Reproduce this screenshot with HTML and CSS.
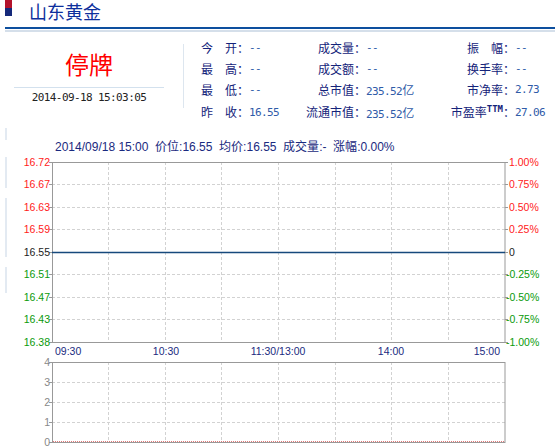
FILE: index.html
```html
<!DOCTYPE html>
<html lang="zh-CN">
<head>
    <meta charset="UTF-8">
    <meta name="viewport" content="width=device-width, initial-scale=1.0">
    <title>山东黄金</title>
    <link rel="stylesheet" href="styles.css">
</head>
<body>
    <div class="header">
        <div class="logo"></div>
        <h1 class="title">山东黄金</h1>
    </div>
    <div class="rule-dark"></div>
    <div class="rule-light"></div>

    <div class="quote">
        <div class="status-box">
            <div class="status">停牌</div>
            <div class="time">2014-09-18 15:03:05</div>
        </div>
        <div class="stats">
            <span class="lbl">今　开：</span><span class="val">--</span>
            <span class="lbl r">成交量：</span><span class="val">--</span>
            <span class="lbl r">振　幅：</span><span class="val">--</span>

            <span class="lbl">最　高：</span><span class="val">--</span>
            <span class="lbl r">成交额：</span><span class="val">--</span>
            <span class="lbl r">换手率：</span><span class="val">--</span>

            <span class="lbl">最　低：</span><span class="val">--</span>
            <span class="lbl r">总市值：</span><span class="val">235.52<span class="cn">亿</span></span>
            <span class="lbl r">市净率：</span><span class="val">2.73</span>

            <span class="lbl">昨　收：</span><span class="val">16.55</span>
            <span class="lbl r">流通市值：</span><span class="val">235.52<span class="cn">亿</span></span>
            <span class="lbl r">市盈率<sup>TTM</sup>：</span><span class="val">27.06</span>
        </div>
    </div>

    <svg class="chart" width="555" height="327" viewBox="0 0 555 327">
        <!-- faint rail on the left -->
        <g class="rail">
            <line x1="6" y1="8" x2="6" y2="20"/>
            <line x1="6" y1="37" x2="6" y2="68"/>
            <line x1="6" y1="78" x2="6" y2="137"/>
            <line x1="6" y1="147" x2="6" y2="173"/>
        </g>

        <text class="info" x="55" y="31">2014/09/18 15:00&#160; 价位:16.55&#160; 均价:16.55&#160; 成交量:-&#160; 涨幅:0.00%</text>

        <!-- price grid -->
        <g class="grid">
            <line x1="52" y1="64.5" x2="505" y2="64.5"/>
            <line x1="52" y1="87.5" x2="505" y2="87.5"/>
            <line x1="52" y1="109.5" x2="505" y2="109.5"/>
            <line x1="52" y1="154.5" x2="505" y2="154.5"/>
            <line x1="52" y1="177.5" x2="505" y2="177.5"/>
            <line x1="52" y1="199.5" x2="505" y2="199.5"/>
            <line x1="108.5" y1="42" x2="108.5" y2="222"/>
            <line x1="165.5" y1="42" x2="165.5" y2="222"/>
            <line x1="221.5" y1="42" x2="221.5" y2="222"/>
            <line x1="278.5" y1="42" x2="278.5" y2="222"/>
            <line x1="335.5" y1="42" x2="335.5" y2="222"/>
            <line x1="391.5" y1="42" x2="391.5" y2="222"/>
            <line x1="448.5" y1="42" x2="448.5" y2="222"/>
        </g>
        <rect class="frame" x="52.5" y="42.5" width="452.5" height="180"/>
        <g class="ticks">
            <line x1="49" y1="42.5" x2="52" y2="42.5"/>
            <line x1="49" y1="64.5" x2="52" y2="64.5"/>
            <line x1="49" y1="87.5" x2="52" y2="87.5"/>
            <line x1="49" y1="109.5" x2="52" y2="109.5"/>
            <line x1="49" y1="132.5" x2="52" y2="132.5"/>
            <line x1="49" y1="154.5" x2="52" y2="154.5"/>
            <line x1="49" y1="177.5" x2="52" y2="177.5"/>
            <line x1="49" y1="199.5" x2="52" y2="199.5"/>
            <line x1="49" y1="222.5" x2="52" y2="222.5"/>
            <line x1="505" y1="42.5" x2="508" y2="42.5"/>
            <line x1="505" y1="64.5" x2="508" y2="64.5"/>
            <line x1="505" y1="87.5" x2="508" y2="87.5"/>
            <line x1="505" y1="109.5" x2="508" y2="109.5"/>
            <line x1="505" y1="132.5" x2="508" y2="132.5"/>
            <line x1="505" y1="154.5" x2="508" y2="154.5"/>
            <line x1="505" y1="177.5" x2="508" y2="177.5"/>
            <line x1="505" y1="199.5" x2="508" y2="199.5"/>
            <line x1="505" y1="222.5" x2="508" y2="222.5"/>
        </g>
        <line class="price" x1="52" y1="132.5" x2="505" y2="132.5"/>

        <g class="axis-l">
            <text class="up" x="50" y="46">16.72</text>
            <text class="up" x="50" y="68">16.67</text>
            <text class="up" x="50" y="91">16.63</text>
            <text class="up" x="50" y="113">16.59</text>
            <text class="flat" x="50" y="136">16.55</text>
            <text class="down" x="50" y="158">16.51</text>
            <text class="down" x="50" y="181">16.47</text>
            <text class="down" x="50" y="203">16.43</text>
            <text class="down" x="50" y="226">16.38</text>
        </g>
        <g class="axis-r">
            <text class="up" x="509" y="46">1.00%</text>
            <text class="up" x="509" y="68">0.75%</text>
            <text class="up" x="509" y="91">0.50%</text>
            <text class="up" x="509" y="113">0.25%</text>
            <text class="flat" x="509" y="136">0</text>
            <text class="down" x="506" y="158">-0.25%</text>
            <text class="down" x="506" y="181">-0.50%</text>
            <text class="down" x="506" y="203">-0.75%</text>
            <text class="down" x="506" y="226">-1.00%</text>
        </g>
        <g class="axis-x">
            <text x="55" y="235">09:30</text>
            <text x="166" y="235" text-anchor="middle">10:30</text>
            <text x="278" y="235" text-anchor="middle">11:30/13:00</text>
            <text x="391" y="235" text-anchor="middle">14:00</text>
            <text x="500" y="235" text-anchor="end">15:00</text>
        </g>

        <!-- volume grid -->
        <g class="grid">
            <line x1="52" y1="262.5" x2="505" y2="262.5"/>
            <line x1="52" y1="282.5" x2="505" y2="282.5"/>
            <line x1="52" y1="302.5" x2="505" y2="302.5"/>
            <line x1="108.5" y1="242" x2="108.5" y2="322"/>
            <line x1="165.5" y1="242" x2="165.5" y2="322"/>
            <line x1="221.5" y1="242" x2="221.5" y2="322"/>
            <line x1="278.5" y1="242" x2="278.5" y2="322"/>
            <line x1="335.5" y1="242" x2="335.5" y2="322"/>
            <line x1="391.5" y1="242" x2="391.5" y2="322"/>
            <line x1="448.5" y1="242" x2="448.5" y2="322"/>
        </g>
        <rect class="frame" x="52.5" y="242.5" width="452.5" height="80"/>
        <g class="ticks">
            <line x1="49" y1="242.5" x2="52" y2="242.5"/>
            <line x1="49" y1="262.5" x2="52" y2="262.5"/>
            <line x1="49" y1="282.5" x2="52" y2="282.5"/>
            <line x1="49" y1="302.5" x2="52" y2="302.5"/>
            <line x1="49" y1="322.5" x2="52" y2="322.5"/>
        </g>
        <line class="vol" x1="53" y1="321.5" x2="505" y2="321.5"/>
        <g class="axis-v">
            <text x="50" y="246">4</text>
            <text x="50" y="266">3</text>
            <text x="50" y="286">2</text>
            <text x="50" y="306">1</text>
            <text x="50" y="326">0</text>
        </g>
    </svg>
</body>
</html>
```

FILE: styles.css
```css
* {
    box-sizing: border-box;
    margin: 0;
    padding: 0;
}
body {
    width: 555px;
    background: #fff;
    font-family: "Noto Sans CJK SC", "Liberation Sans", sans-serif;
    overflow: hidden;
}
.header {
    display: flex;
    align-items: flex-start;
    height: 27px;
}
.logo {
    width: 7px;
    height: 16px;
    margin-left: 5px;
    background: linear-gradient(#b3122b 50%, #15297a 50%);
}
.title {
    margin-left: 17px;
    font-size: 18px;
    font-weight: normal;
    line-height: 22px;
    color: #0d2f9c;
}
.rule-dark {
    margin-left: 5px;
    height: 2px;
    background: #0d4f9e;
}
.rule-light {
    margin: 1px 0 0 5px;
    height: 2px;
    background: #d5dfea;
}

.quote {
    display: flex;
    align-items: flex-start;
    height: 88px;
}
.status-box {
    width: 189px;
    height: 64px;
    margin-top: 12px;
    padding-left: 14px;
    padding-right: 19px;
    border-right: 1px solid #dde6ef;
}
.status {
    margin-top: 4px;
    height: 32px;
    line-height: 32px;
    font-size: 24px;
    color: #ff0000;
    text-align: center;
}
.time {
    margin-top: 7px;
    border-top: 1px solid #d3e1ee;
    line-height: 20px;
    font-family: "DejaVu Sans Mono", monospace;
    font-size: 11px;
    letter-spacing: -0.6px;
    color: #222;
    text-align: center;
}
.stats {
    display: grid;
    grid-template-columns: 48px 56px 61px 69px 80px 40px;
    grid-template-rows: 21px 21px 21px 24px;
    align-items: center;
    margin: 5px 0 0 17px;
    font-size: 12px;
}
.lbl {
    color: #14237a;
    white-space: nowrap;
    line-height: 14px;
}
.lbl.r {
    text-align: right;
}
.lbl sup {
    font-family: "DejaVu Sans Mono", monospace;
    font-size: 9px;
    font-weight: bold;
    line-height: 0;
}
.val {
    font-family: "DejaVu Sans Mono", monospace;
    font-size: 11px;
    letter-spacing: -0.6px;
    color: #2f5ba8;
    white-space: nowrap;
}
.val .cn {
    font-family: "Noto Sans CJK SC", sans-serif;
    font-size: 12px;
    letter-spacing: 0;
}

.chart {
    display: block;
    font-family: "Liberation Sans", Arial, sans-serif;
}
.rail line {
    stroke: #e3eaf2;
    stroke-width: 2;
}
.info {
    font-size: 12px;
    fill: #1a2a80;
}
.grid line {
    stroke: #d2d2d2;
    stroke-width: 1;
    stroke-dasharray: 3 2;
}
.frame {
    fill: none;
    stroke: #999;
    stroke-width: 1;
}
.ticks line {
    stroke: #999;
    stroke-width: 1;
}
.price {
    stroke: #16497c;
    stroke-width: 1.5;
}
.vol {
    stroke: #e07878;
    stroke-width: 1;
    stroke-dasharray: 1 1;
}
.axis-l text,
.axis-v text {
    text-anchor: end;
}
.axis-l text,
.axis-r text,
.axis-x text,
.axis-v text {
    font-size: 10.5px;
}
.up {
    fill: #ff1a1a;
}
.flat {
    fill: #222;
}
.down {
    fill: #0a9a0a;
}
.axis-x text {
    fill: #1a2a80;
}
.axis-v text {
    fill: #888;
}
```
